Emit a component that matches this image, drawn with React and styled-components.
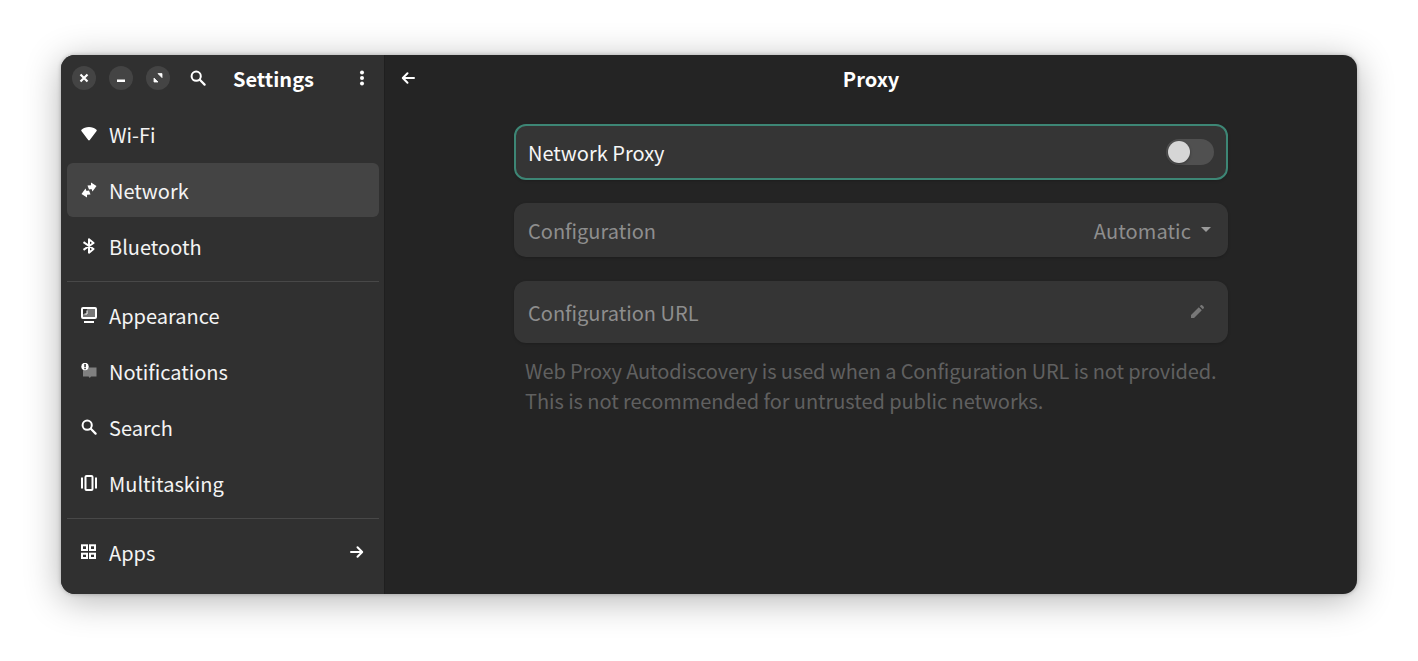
import React from 'react';
import styled, { createGlobalStyle } from 'styled-components';

const GlobalStyle = createGlobalStyle`
    html, body {
        margin: 0;
        background: #ffffff;
        font-family: 'Noto Sans CJK SC', 'Noto Sans', sans-serif;
    }
    * { box-sizing: border-box; }
`;

const Page = styled.div`
    width: 1418px;
    height: 661px;
    padding: 55px 61px 67px;
    overflow: hidden;
`;

const Window = styled.div`
    width: 1296px;
    height: 539px;
    display: flex;
    border-radius: 14px;
    overflow: hidden;
    background: #242424;
    box-shadow: 0 6px 36px rgba(0, 0, 0, 0.3), 0 0 4px rgba(0, 0, 0, 0.25);
`;

const Sidebar = styled.aside`
    width: 324px;
    flex: none;
    background: #303030;
    border-right: 1px solid #1f1f1f;
    display: flex;
    flex-direction: column;
`;

const SidebarHeader = styled.header`
    height: 52px;
    flex: none;
    display: flex;
    align-items: center;
    padding: 0 14px 6px 11px;
    color: #ffffff;
`;

const WindowButton = styled.button`
    width: 24px;
    height: 24px;
    flex: none;
    border: 0;
    padding: 0;
    margin-right: 13px;
    border-radius: 50%;
    background: #444444;
    display: flex;
    align-items: center;
    justify-content: center;
    color: #ffffff;
`;

const HeaderIcon = styled.span`
    display: flex;
    width: 16px;
    height: 16px;
    flex: none;
    margin-left: ${(p) => p.$left || 0}px;
    color: #ffffff;
`;

const SidebarTitle = styled.div`
    font-size: 20px;
    font-weight: 700;
    line-height: 26px;
    margin-left: 27px;
    padding-top: 2px;
    flex: 1;
`;

const NavList = styled.nav`
    display: flex;
    flex-direction: column;
    gap: 2px;
    padding: 0 5px 0 6px;
`;

const NavRow = styled.div`
    height: 54px;
    flex: none;
    display: flex;
    align-items: center;
    gap: 12px;
    padding: 0 14px;
    border-radius: 6px;
    color: #f4f4f4;
    font-size: 20px;
    line-height: 28px;
    background: ${(p) => (p.$active ? '#444444' : 'transparent')};
`;

const NavLabel = styled.span`
    flex: 1;
    padding-top: 2px;
`;

const NavDivider = styled.hr`
    border: 0;
    height: 1px;
    flex: none;
    background: #484848;
    margin: 6px 0 4px;
`;

const Main = styled.main`
    flex: 1;
    display: flex;
    flex-direction: column;
    min-width: 0;
`;

const MainHeader = styled.header`
    height: 52px;
    flex: none;
    position: relative;
    display: flex;
    align-items: center;
    justify-content: center;
    padding-bottom: 5px;
    color: #ffffff;
    font-size: 20px;
    font-weight: 700;
    line-height: 28px;
`;

const BackButton = styled.span`
    position: absolute;
    left: 15px;
    top: 15px;
    width: 16px;
    height: 16px;
    display: flex;
`;

const Content = styled.div`
    width: 714px;
    margin: 17px auto 0;
    display: flex;
    flex-direction: column;
`;

const Row = styled.div`
    height: ${(p) => p.$height}px;
    margin-bottom: ${(p) => p.$after || 0}px;
    display: flex;
    align-items: center;
    justify-content: space-between;
    padding: 0 14px;
    border-radius: 12px;
    background: #353535;
    font-size: 20px;
    line-height: 28px;
    color: ${(p) => (p.$dim ? '#8e8e8e' : '#f6f6f6')};
    box-shadow: 0 1px 3px rgba(0, 0, 0, 0.18);
`;

const FocusRow = styled(Row)`
    padding: 0 12px;
    border: 2px solid #3d8675;
`;

const RowLabel = styled.span`
    padding-top: 2px;
`;

const Toggle = styled.div`
    width: 48px;
    height: 26px;
    border-radius: 13px;
    background: #505050;
    padding: 2px;
`;

const Knob = styled.div`
    width: 22px;
    height: 22px;
    border-radius: 50%;
    background: #d6d6d6;
    box-shadow: 0 1px 3px rgba(0, 0, 0, 0.35);
`;

const ValueGroup = styled.div`
    display: flex;
    align-items: center;
    gap: 10px;
    padding-right: ${(p) => p.$right}px;
`;

const ValueLabel = styled(RowLabel)`
    letter-spacing: 0.1px;
`;

const Caret = styled.span`
    width: 0;
    height: 0;
    margin-top: -2px;
    border-left: 5.5px solid transparent;
    border-right: 5.5px solid transparent;
    border-top: 5px solid #9a9a9a;
`;

const Caption = styled.p`
    margin: 13px 11px 0;
    font-size: 20px;
    line-height: 30px;
    color: #606060;
    white-space: nowrap;
`;

const CaptionLine = styled.span`
    display: block;
    letter-spacing: ${(p) => p.$tracking}px;
`;

const Glyph = ({ children, size = 16 }) => (
    <svg width={size} height={size} viewBox="0 0 16 16" fill="none" style={{ flex: 'none', display: 'block' }}>
        {children}
    </svg>
);

const SearchGlyph = () => (
    <Glyph>
        <circle cx="6.2" cy="6.2" r="4.6" stroke="#fff" strokeWidth="2" />
        <path d="M9.800 9.800 14.600 14.600" stroke="#fff" strokeWidth="2.200" strokeLinecap="round" />
    </Glyph>
);

const WifiGlyph = () => (
    <Glyph>
        <path d="M8 1C5 1 2.600 1.900.5 3.700.1 4 .1 4.500.4 4.900L7.200 14c.4.600 1.200.600 1.600 0l6.800-9.100c.3-.4.3-.9-.1-1.200C13.400 1.900 11 1 8 1Z" fill="#fff" />
    </Glyph>
);

const NetworkGlyph = () => (
    <Glyph>
        <path d="M6.500 3.500 10 3.200V.5L15.500 4 11.500 9.500 10.500 7 8 7.500Z" fill="#fff" />
        <path d="M9.500 12.500 6 12.800V15.500L.5 12 4.500 6.500 5.500 9 8 8.500Z" fill="#fff" />
    </Glyph>
);

const BluetoothGlyph = () => (
    <Glyph>
        <path d="M2.500 4.200 12.500 11 8 14.700V1.300L12.500 5 2.500 11.800" stroke="#fff" strokeWidth="2" strokeLinejoin="round" />
    </Glyph>
);

const AppearanceGlyph = () => (
    <Glyph>
        <rect x="1" y="1" width="14" height="10" rx="1" fill="#777" stroke="#fff" strokeWidth="2" />
        <path d="M2 2H6V7H2Z" fill="#303030" />
        <path d="M6 3.500V7H3.500" stroke="#fff" strokeWidth="1" />
        <rect x="3" y="14" width="10" height="2" fill="#fff" />
    </Glyph>
);

const NotificationsGlyph = () => (
    <Glyph>
        <path d="M2 4.500H15.500V13.500H10L8.800 15 7.600 13.500H2Z" fill="#808080" />
        <circle cx="4" cy="3.500" r="3.700" fill="#fff" />
        <rect x="3.300" y="1" width="1.500" height="3.200" fill="#303030" />
        <rect x="3.300" y="4.900" width="1.500" height="1.300" fill="#303030" />
    </Glyph>
);

const MultitaskingGlyph = () => (
    <Glyph>
        <rect x="4.500" y="1" width="7" height="14" rx="1" stroke="#fff" strokeWidth="2" />
        <path d="M1 2.500V13.500M15 2.500V13.500" stroke="#fff" strokeWidth="2" />
    </Glyph>
);

const AppsGlyph = () => (
    <Glyph>
        <rect x="1" y="1.300" width="5" height="4.700" stroke="#fff" strokeWidth="2" />
        <rect x="9" y="1.300" width="5" height="4.700" stroke="#fff" strokeWidth="2" />
        <rect x="1" y="9.700" width="5" height="4.300" stroke="#fff" strokeWidth="2" />
        <rect x="9" y="9.700" width="5" height="4.300" stroke="#fff" strokeWidth="2" />
    </Glyph>
);

const ArrowGlyph = ({ left }) => (
    <Glyph>
        {left ? (
            <path d="M14 8H3M7.500 3.300 2.800 8l4.700 4.700" stroke="#fff" strokeWidth="2" strokeLinecap="round" strokeLinejoin="round" />
        ) : (
            <path d="M2 8H13M8.500 3.300 13.200 8l-4.700 4.700" stroke="#fff" strokeWidth="2" strokeLinecap="round" strokeLinejoin="round" />
        )}
    </Glyph>
);

const PencilGlyph = () => (
    <Glyph>
        <path d="M2 14V11L9.800 3.200 12.800 6.200 5 14ZM10.800 2.200 11.800 1.300C12.200.9 12.800.9 13.200 1.300L14.700 2.800C15.100 3.200 15.100 3.800 14.700 4.200L13.800 5.200Z" fill="#777" />
    </Glyph>
);

const primaryItems = [
    { label: 'Wi-Fi', Icon: WifiGlyph },
    { label: 'Network', Icon: NetworkGlyph, active: true },
    { label: 'Bluetooth', Icon: BluetoothGlyph },
];

const secondaryItems = [
    { label: 'Appearance', Icon: AppearanceGlyph },
    { label: 'Notifications', Icon: NotificationsGlyph },
    { label: 'Search', Icon: SearchGlyph },
    { label: 'Multitasking', Icon: MultitaskingGlyph },
];

const NavItem = ({ label, Icon, active, children }) => (
    <NavRow $active={active}>
        <Icon />
        <NavLabel>{label}</NavLabel>
        {children}
    </NavRow>
);

export default function App() {
    return (
        <Page>
            <GlobalStyle />
            <Window>
                <Sidebar>
                    <SidebarHeader>
                        <WindowButton>
                            <Glyph>
                                <path d="M4.500 4.500 11.500 11.500M11.500 4.500 4.500 11.500" stroke="#fff" strokeWidth="2.200" />
                            </Glyph>
                        </WindowButton>
                        <WindowButton>
                            <Glyph>
                                <path d="M4 10.700H12" stroke="#fff" strokeWidth="2.400" />
                            </Glyph>
                        </WindowButton>
                        <WindowButton>
                            <Glyph>
                                <path d="M8 3.600H12V7.600ZM4 8 8 12H4Z" fill="#fff" stroke="#fff" strokeWidth="0.800" />
                            </Glyph>
                        </WindowButton>
                        <HeaderIcon $left={7}>
                            <SearchGlyph />
                        </HeaderIcon>
                        <SidebarTitle>Settings</SidebarTitle>
                        <HeaderIcon>
                            <Glyph>
                                <circle cx="8" cy="2.500" r="2" fill="#fff" />
                                <circle cx="8" cy="8" r="2" fill="#fff" />
                                <circle cx="8" cy="13.500" r="2" fill="#fff" />
                            </Glyph>
                        </HeaderIcon>
                    </SidebarHeader>
                    <NavList>
                        {primaryItems.map((item) => (
                            <NavItem key={item.label} {...item} />
                        ))}
                        <NavDivider />
                        {secondaryItems.map((item) => (
                            <NavItem key={item.label} {...item} />
                        ))}
                        <NavDivider />
                        <NavItem label="Apps" Icon={AppsGlyph}>
                            <ArrowGlyph />
                        </NavItem>
                    </NavList>
                </Sidebar>
                <Main>
                    <MainHeader>
                        <BackButton>
                            <ArrowGlyph left />
                        </BackButton>
                        Proxy
                    </MainHeader>
                    <Content>
                        <FocusRow $height={56} $after={23}>
                            <RowLabel>Network Proxy</RowLabel>
                            <Toggle>
                                <Knob />
                            </Toggle>
                        </FocusRow>
                        <Row $height={54} $after={24} $dim>
                            <RowLabel>Configuration</RowLabel>
                            <ValueGroup $right={3}>
                                <ValueLabel>Automatic</ValueLabel>
                                <Caret />
                            </ValueGroup>
                        </Row>
                        <Row $height={62} $dim>
                            <RowLabel>Configuration URL</RowLabel>
                            <ValueGroup $right={9}>
                                <PencilGlyph />
                            </ValueGroup>
                        </Row>
                        <Caption>
                            <CaptionLine $tracking={-0.11}>
                                Web Proxy Autodiscovery is used when a Configuration URL is not provided.
                            </CaptionLine>
                            <CaptionLine $tracking={-0.06}>
                                This is not recommended for untrusted public networks.
                            </CaptionLine>
                        </Caption>
                    </Content>
                </Main>
            </Window>
        </Page>
    );
}
